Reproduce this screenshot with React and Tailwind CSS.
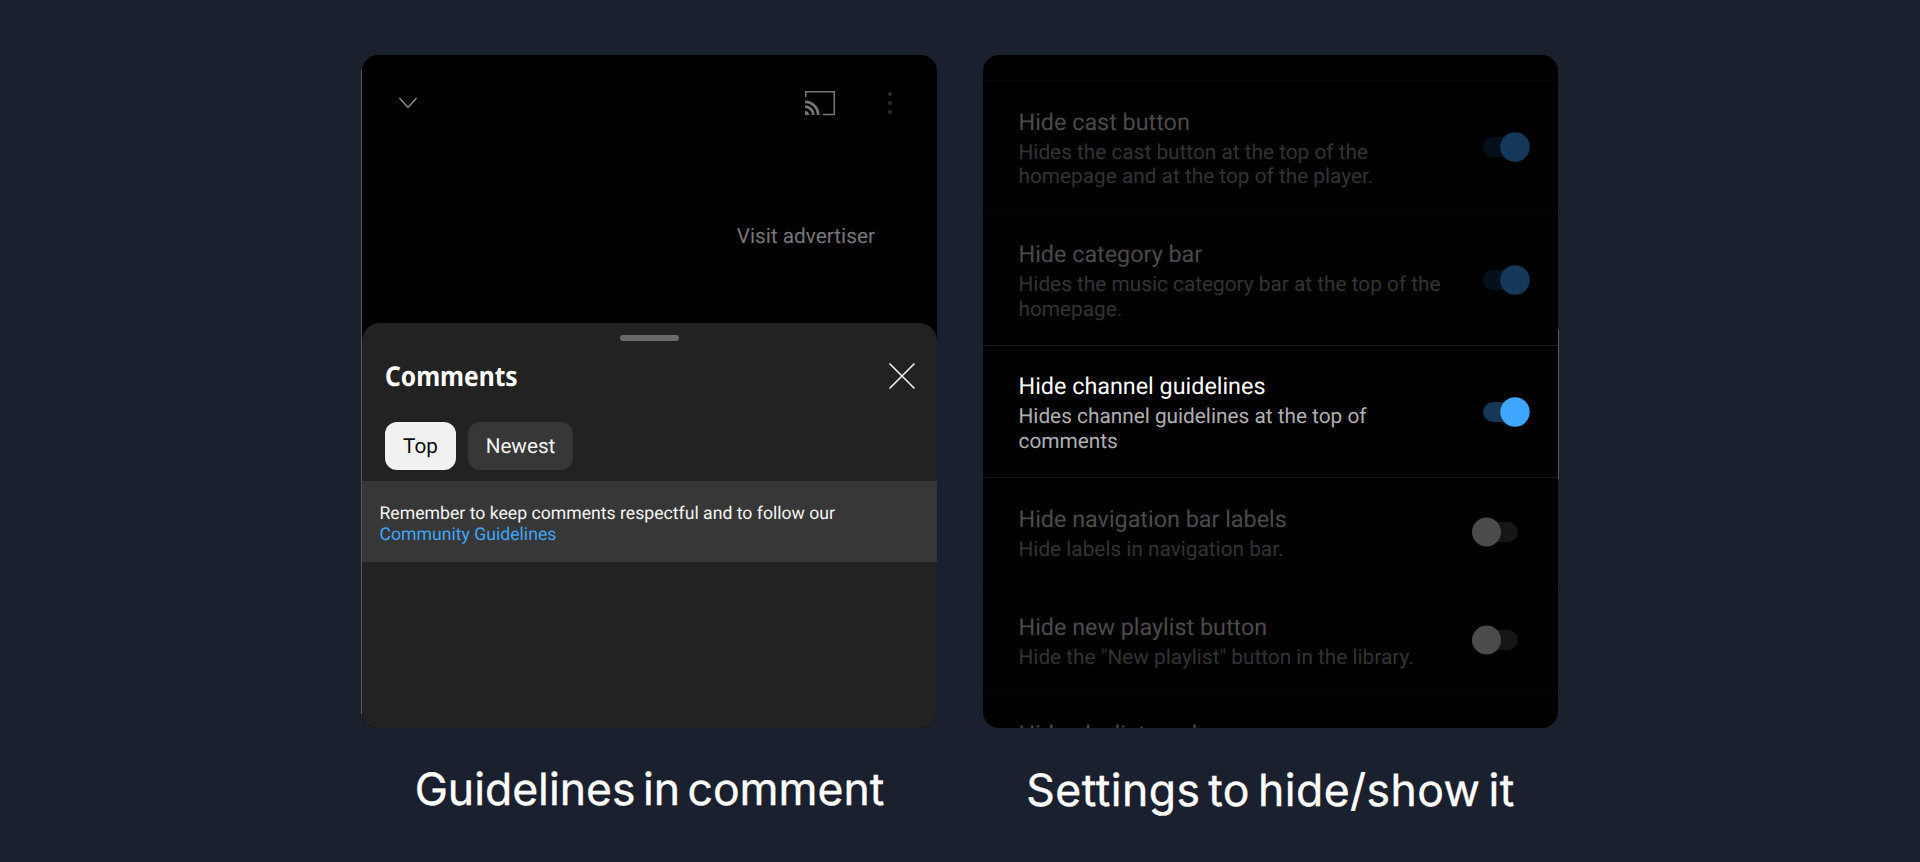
const fit = "[text-rendering:geometricPrecision] whitespace-nowrap";
const caption = "font-['Inter',sans-serif] text-[44.5px] leading-[60px] text-white [word-spacing:-5px] [-webkit-text-stroke:0.4px_white] ";

function Toggle({ on, dim }) {
  return (
    <div className={"flex h-[30px] w-[47px] shrink-0 items-center " + (on ? "mr-[28px]" : "mr-[39px]")}>
      <svg width="47" height="30" viewBox="0 0 47 30">
        {on ? (
          <>
            <rect x="0" y="5" width="40" height="20" rx="10" fill={dim ? "#05101b" : "#163757"} />
            <circle cx="32" cy="15" r="14.7" fill={dim ? "#15395a" : "#3ea6ff"} />
          </>
        ) : (
          <>
            <rect x="6" y="5" width="40" height="20" rx="10" fill="#161616" />
            <circle cx="14.5" cy="15" r="14.5" fill="#4b4b4b" />
          </>
        )}
      </svg>
    </div>
  );
}

const ROWS = [
  { title: "Hide cast button", desc: ["Hides the cast button at the top of the", "homepage and at the top of the player."], on: true, dim: true, box: "h-[133px] border-[#060606]" },
  { title: "Hide category bar", desc: ["Hides the music category bar at the top of the", "homepage."], on: true, dim: true, box: "h-[132px] border-[#1c1c1c]" },
  { title: "Hide channel guidelines", desc: ["Hides channel guidelines at the top of", "comments"], on: true, dim: false, box: "h-[132px] border-[#161616]" },
  { title: "Hide navigation bar labels", desc: ["Hide labels in navigation bar."], on: false, dim: true, box: "h-[109px] border-[#050505]" },
  { title: "Hide new playlist button", desc: ["Hide the \"New playlist\" button in the library."], on: false, dim: true, box: "h-[107px] border-[#060606]" },
];

function Row({ title, desc, on, dim, box }) {
  return (
    <div className={"flex shrink-0 items-center justify-between border-b pl-[35.5px] " + box}>
      <div className="pt-[4px]">
        <div className={"text-[23.35px] leading-[27px] " + fit + (dim ? " text-[#4b4b4b]" : " text-white")}>{title}</div>
        <div className={"mt-[5px] text-[20.8px] leading-[24.5px] " + fit + (dim ? " text-[#333]" : " text-[#b0b0b0]")}>
          {desc.map((l) => <div key={l}>{l}</div>)}
        </div>
      </div>
      <Toggle on={on} dim={dim} />
    </div>
  );
}

export default function App() {
  return (
    <main className="flex h-[862px] w-full justify-center gap-[46px] overflow-hidden bg-[#1b202e] pt-[55px] font-['Roboto',sans-serif]">
      <section className="relative flex w-[575px] flex-col items-center">
        <div className="absolute top-[15px] -left-px h-[644px] w-px bg-[#555a66]" />
        <div className="flex h-[673px] w-full flex-col overflow-hidden rounded-[16px] bg-black">
          <div className="flex h-[96px] items-center pl-[36px]">
            <svg width="20" height="14" viewBox="0 0 20 14" fill="none" stroke="#8b8b8b" strokeWidth="1.5"><path d="M1.5 2 10 11.5 18.5 2" /></svg>
            <svg className="ml-auto" width="30" height="25" viewBox="0 0 30 25" fill="none" stroke="#777">
              <path d="M.8 6V.8h28.4v22.6H18" strokeWidth="1.5" />
              <path d="M0 10.9A13.2 13.2 0 0 1 13.2 24.1M0 15.7A8.4 8.4 0 0 1 8.4 24.1" strokeWidth="2.8" />
              <path d="M0 20.1A4 4 0 0 1 4 24.1H0Z" fill="#777" stroke="none" />
            </svg>
            <svg className="mr-[44px] ml-[52px]" width="6" height="24" viewBox="0 0 6 24" fill="#2b2b2b"><circle cx="3" cy="3" r="2" /><circle cx="3" cy="12" r="2" /><circle cx="3" cy="21" r="2" /></svg>
          </div>
          <div className={"flex h-[172px] justify-end pt-[74px] pr-[62px] text-[20.8px] leading-[24px] text-[#777] " + fit}>Visit advertiser</div>
          <div className="flex flex-1 flex-col rounded-t-[18px] bg-[#222]">
            <div className="mx-auto mt-[11.5px] h-[6.5px] w-[59px] rounded-[3px] bg-[#6a6a6a]" />
            <div className="flex h-[70px] items-center justify-between pr-[21px] pl-[23px]">
              <h2 className={"origin-left scale-x-[0.9] font-['Noto_Sans',sans-serif] text-[27.3px] font-bold text-white " + fit}>Comments</h2>
              <svg width="28" height="28" viewBox="0 0 28 28" stroke="#f1f1f1" strokeWidth="1.6"><path d="M1.5 1.5 26.5 26.5M26.5 1.5 1.5 26.5" /></svg>
            </div>
            <div className="flex gap-3 pt-[11px] pl-[23px] text-[20.7px]">
              <button className={"h-[48px] w-[71px] rounded-[12px] bg-[#f1f1f1] pt-[3px] text-[#0f0f0f] " + fit}>Top</button>
              <button className={"h-[48px] w-[105px] rounded-[12px] bg-[#373737] pt-[3px] text-[#f1f1f1] " + fit}>Newest</button>
            </div>
            <div className={"mt-[11px] h-[81px] bg-[#373737] pt-[23px] pl-[17.5px] text-[17.65px] leading-[20.7px] text-[#f5f5f5] " + fit}>
              <p>Remember to keep comments respectful and to follow our</p>
              <p className="text-[#3ea6ff]">Community Guidelines</p>
            </div>
          </div>
        </div>
        <p className={"mt-[31px] " + caption + fit}>Guidelines in comment</p>
      </section>
      <section className="relative flex w-[575px] flex-col items-center">
        <div className="absolute top-[275px] -right-px h-[149px] w-px bg-[#555a66]" />
        <div className="flex h-[673px] w-full flex-col overflow-hidden rounded-[16px] bg-black">
          <div className="h-[26px] shrink-0 border-b border-[#060606]" />
          {ROWS.map((r) => <Row key={r.title} {...r} />)}
          <div className={"shrink-0 pt-[27px] pl-[35.5px] text-[23.35px] leading-[27px] text-[#4b4b4b] " + fit}>Hide playlist card</div>
        </div>
        <p className={"mt-[32px] tracking-[0.45px] " + caption + fit}>Settings to hide/show it</p>
      </section>
    </main>
  );
}
